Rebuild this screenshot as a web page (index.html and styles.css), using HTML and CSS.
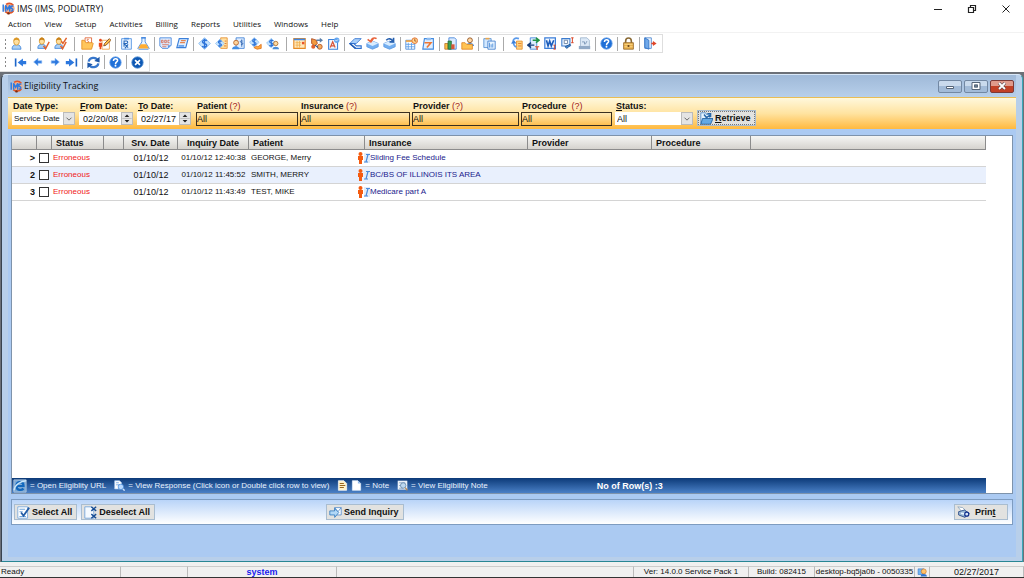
FILE: index.html
```html
<!DOCTYPE html>
<html lang="en">
<head>
<meta charset="utf-8">
<title>IMS (IMS, PODIATRY)</title>
<link rel="stylesheet" href="styles.css">
</head>
<body>
<svg class="sprite" aria-hidden="true">
  <symbol id="logo" viewBox="0 0 16 16"><circle cx="9" cy="8" r="6.6" fill="#f3b08c"/><path d="M5 3a7 7 0 0 1 9 1M4 12a7 7 0 0 0 10-1" stroke="#e0562a" stroke-width="2" fill="none"/><path d="M1.500 3v9M4.500 12V4l2.500 5 2.500-5v8M14 5.500c-3-1.500-4 1.500-2 2.500s2 3.500-1 3" stroke="#2f7ae0" stroke-width="1.800" fill="none"/><circle cx="8" cy="14" r="1.500" fill="#7a2c10"/></symbol>
  <symbol id="user" viewBox="0 0 16 16"><path d="M2.500 15c0-4 2-5.500 5.500-5.500s5.500 1.500 5.500 5.500z" fill="#a9cff5" stroke="#3c82d8"/><ellipse cx="8" cy="5.500" rx="3.500" ry="4.500" fill="#ffe0a0" stroke="#d8962a"/><path d="M4.500 5c0-5 7-5 7 0-2-2-5-2-7 0z" fill="#d8921e"/></symbol>
  <symbol id="usercheck" viewBox="0 0 16 16"><path d="M1 14c0-4 2-5 5-5s5 1 5 5z" fill="#a9cff5" stroke="#3c82d8"/><ellipse cx="6" cy="5" rx="3.200" ry="4" fill="#ffe0a0" stroke="#d8962a"/><path d="M3 4.500c0-5 6-5 6 0-2-1.500-4-1.500-6 0z" fill="#c8801a"/><path d="M8 11l2.500 3.500L15 6" fill="none" stroke="#e2622c" stroke-width="1.800"/></symbol>
  <symbol id="userchecks" viewBox="0 0 16 16"><use href="#usercheck"/><path d="M9 5l2 3 4.500-7" fill="none" stroke="#e2622c" stroke-width="1.800"/></symbol>
  <symbol id="folderdoc" viewBox="0 0 16 16"><path d="M5 1h8v9H5z" fill="#fff" stroke="#dd5a2a"/><path d="M9.500 3c-3-1-2 2-1 2s2 2-1 2" stroke="#dd5a2a" fill="none"/><path d="M1 4h3l2 3h8l1 1-2 7H1z" fill="#ffc65c" stroke="#e58a1c"/></symbol>
  <symbol id="manpencil" viewBox="0 0 16 16"><path d="M5 4h9v11H5z" fill="#fff" stroke="#f09a3c"/><circle cx="3" cy="4" r="1.700" fill="#e8471c"/><path d="M1 7h4v5H4v3H2v-3H1z" fill="#e8471c"/><path d="M7 11l1-3 6-6 2 2-6 6z" fill="#ffc049" stroke="#754020"/></symbol>
  <symbol id="rx" viewBox="0 0 16 16"><path d="M2 2h12v13H2z" fill="#e8f3ff" stroke="#4b8ee0"/><path d="M5 1h6v2H5z" fill="#4b8ee0"/><path d="M5 12V5h3c2 0 2 3 0 3H5l5 5m0-4l-4 5" stroke="#2466b9" stroke-width="1.300" fill="none"/></symbol>
  <symbol id="flask" viewBox="0 0 16 16"><path d="M6 1h4v5l5 8-1 1H2l-1-1 5-8z" fill="#e7f3ff" stroke="#3980dc"/><path d="M4.500 9h7l3 5H1.500z" fill="#ffad32"/><path d="M5 1h6" stroke="#3980dc" stroke-width="1.500"/></symbol>
  <symbol id="doc" viewBox="0 0 16 16"><path d="M1 1h14v9l-4 4H4l-3-3z" fill="#dcebff" stroke="#3f81da"/><path d="M3 4h2v3H3zM7 4h2v3H7zM13 4h-2v3h2M4 9.500h8M4 12h5" fill="none" stroke="#d5684f"/><path d="M15 10l-4 4v-4z" fill="#5b99ea"/></symbol>
  <symbol id="ledger" viewBox="0 0 16 16"><path d="M4 2h11l-3 11H1z" fill="#e0efff" stroke="#3b7fd9" stroke-width="1.400"/><path d="M6 4.500h6M5 7h6" stroke="#e5844f" stroke-width="1.500"/><path d="M3 11h7" stroke="#5d9be9" stroke-width="2"/></symbol>
  <symbol id="dollar" viewBox="0 0 16 16"><path d="M8 .8L15.200 8 8 15.200.8 8z" fill="#c5e3ff" stroke="#81b9f0"/><path d="M11 4.500C7 2.500 4.500 5 6 7l4 2c2 2-1 4.500-5 2.500M8 2v12" stroke="#2b72d8" stroke-width="1.700" fill="none"/></symbol>
  <symbol id="dollardoc" viewBox="0 0 16 16"><path d="M7 1h8v13H7z" fill="#ffe0a2" stroke="#e58a28"/><use href="#dollar" x="0" y="2" width="12" height="12"/><path d="M12 5h2M12 8h2M11 11h3" stroke="#d86b20"/></symbol>
  <symbol id="userdollar" viewBox="0 0 16 16"><path d="M5 1h10v13H5z" fill="#deedff" stroke="#397cd5"/><circle cx="5" cy="7" r="3" fill="#ffd49b" stroke="#b35c20"/><path d="M0 15c0-5 9-5 9 0z" fill="#438ee4"/><path d="M13 5c-4-1-3 2-1 2s2 3-1 2M12 3v9" stroke="#255cae" fill="none"/></symbol>
  <symbol id="dollarhand" viewBox="0 0 16 16"><use href="#dollar" x="0" y="0" width="13" height="13"/><path d="M6 13l4-2 1 1 4-3v5l-5 1z" fill="#ffab3e" stroke="#df7120"/></symbol>
  <symbol id="dollaruser" viewBox="0 0 16 16"><use href="#dollar" x="0" y="1" width="13" height="13"/><circle cx="12" cy="8" r="2.700" fill="#ffdb9f" stroke="#a9682b"/><path d="M8 15c0-4 8-4 8 0z" fill="#4b8ed8"/></symbol>
  <symbol id="calendar" viewBox="0 0 16 16"><path d="M1 2h14v12H1z" fill="#ffe9bd" stroke="#e68a25" stroke-width="1.400"/><path d="M1 2h14v2H1z" fill="#4186e0"/><path d="M3 7h7M3 10h7M5 5v8M8 5v8" stroke="#f0b050"/><path d="M11 6h3v3h-3z" fill="#e9532a"/></symbol>
  <symbol id="process" viewBox="0 0 16 16"><path d="M2 2l6 2 1 4-3 3-4-3z" fill="#f29a40" stroke="#a94116"/><circle cx="4" cy="12" r="2.500" fill="#e0602c"/><circle cx="12" cy="12" r="3" fill="#f6b060" stroke="#b24c1c"/><path d="M8 3h4V1l4 3-4 3V5H8z" fill="#5b7fa8"/><path d="M6 10l4 3" stroke="#30588d" stroke-width="1.500"/></symbol>
  <symbol id="doca" viewBox="0 0 16 16"><path d="M2 3h11v12H2z" fill="#f0f7ff" stroke="#3c82da" stroke-width="1.300"/><path d="M4 13l3-7 3 7M5 11h4" stroke="#d95336" stroke-width="1.500" fill="none"/><circle cx="12" cy="4" r="3.300" fill="#65a6ef"/><path d="M10.500 4l1 1 2-2" stroke="#fff" fill="none"/></symbol>
  <symbol id="book" viewBox="0 0 16 16"><path d="M7 2h8L9 8H1z" fill="#a9cffa" stroke="#2e70cf"/><path d="M1 8h5l3 3h6v3H8z" fill="#fff" stroke="#2e70cf" stroke-width="1.400"/><path d="M1 8l7 6" stroke="#235cb2" stroke-width="2"/></symbol>
  <symbol id="boxin" viewBox="0 0 16 16"><path d="M1 8l7-3 7 3v4l-7 3-7-3z" fill="#73aff0" stroke="#5b97e2"/><path d="M1 8l7 3 7-3-7-3z" fill="#d8ecff"/><path d="M13 2C10 0 7 2 6 5M2 3l4 3 3-4" stroke="#e8643c" stroke-width="2" fill="none"/></symbol>
  <symbol id="boxout" viewBox="0 0 16 16"><path d="M1 8l7-3 7 3v4l-7 3-7-3z" fill="#73aff0" stroke="#5b97e2"/><path d="M1 8l7 3 7-3-7-3z" fill="#d8ecff"/><path d="M4 4c3-3 6-2 8 1M13 1v5H8" stroke="#265fae" stroke-width="2" fill="none"/></symbol>
  <symbol id="calclock" viewBox="0 0 16 16"><path d="M1 4h11v11H1z" fill="#fff" stroke="#4285d8"/><path d="M1 4h11v2H1z" fill="#f1a13b"/><path d="M1 9h11M1 12h11M4 7v8M8 7v8" stroke="#579be8"/><circle cx="12" cy="4.500" r="3.500" fill="#ffd890" stroke="#e0662a"/><path d="M12 2v3h2" stroke="#a34b21" fill="none"/></symbol>
  <symbol id="clip" viewBox="0 0 16 16"><path d="M3 2h11v13H1z" fill="#e1efff" stroke="#438bdf" stroke-width="1.400"/><path d="M6 1h5v3H5z" fill="#8fbcf0"/><path d="M3 7h8l-5 6" stroke="#ed7734" stroke-width="2" fill="none"/></symbol>
  <symbol id="chart" viewBox="0 0 16 16"><path d="M6 1h7l2 2v12H6z" fill="#dcebff" stroke="#3a7ed8"/><path d="M1 8h4v7H1z" fill="#ffc043" stroke="#b9742a"/><path d="M5 5h4v10H5z" fill="#39a254" stroke="#256b36"/><path d="M9 9h4v6H9z" fill="#d7573b"/></symbol>
  <symbol id="folderuser" viewBox="0 0 16 16"><circle cx="11" cy="4" r="3" fill="#ffd9a5" stroke="#874817"/><path d="M6 11c0-5 10-5 10 0z" fill="#3c86dd"/><path d="M1 7h4l2 2h7v6H1z" fill="#ffc353" stroke="#df8422"/></symbol>
  <symbol id="clips" viewBox="0 0 16 16"><path d="M1 2h9v11H1z" fill="#d3e8ff" stroke="#4e8bd0"/><path d="M6 5h9v10H6z" fill="#e9f4ff" stroke="#3979ca"/><path d="M3 1h5v2H3z" fill="#eba74d"/><path d="M8 7v6M10 9v4M12 8v5" stroke="#4387d7"/></symbol>
  <symbol id="copyback" viewBox="0 0 16 16"><path d="M8 5h7v10H8z" fill="#ffd27b" stroke="#e68e2c"/><path d="M10 8h4M10 11h4" stroke="#e37527"/><path d="M11 2C6 0 3 3 4 7s2 5 4 5" stroke="#5b9aea" stroke-width="2" fill="none"/><path d="M1 8l4-4 3 4z" fill="#3b7fd9"/></symbol>
  <symbol id="swap" viewBox="0 0 16 16"><path d="M4 1h8v14H4z" fill="#deedff" stroke="#367fd6"/><path d="M7 4h7M11 1l4 3-4 3" stroke="#219344" stroke-width="1.800" fill="none"/><path d="M9 10H2m3-3l-4 3 4 3" stroke="#173d79" stroke-width="1.800" fill="none"/><path d="M10 12h5M12.500 12v4" stroke="#df4a27" stroke-width="1.500"/></symbol>
  <symbol id="word" viewBox="0 0 16 16"><path d="M1 1h13v13H1z" fill="#f0f7ff" stroke="#3b7ed9" stroke-width="1.500"/><path d="M3 4l2 7 2-6 2 6 3-7" stroke="#1c5dbb" stroke-width="2" fill="none"/><path d="M13 10v5M11.500 10h3M11.500 15h3" stroke="#d84224"/></symbol>
  <symbol id="scan" viewBox="0 0 16 16"><path d="M1 2h10v9H1z" fill="#e7f3ff" stroke="#3b7bce" stroke-width="1.300"/><path d="M4 4h4v4H4z" fill="#fff" stroke="#647b9c"/><path d="M12 10l-5 4-2-2 6-3z" fill="#418cdb" stroke="#204d86"/><path d="M14 1v6M12.500 1h3M12.500 7h3" stroke="#d84224" stroke-width="1.200"/></symbol>
  <symbol id="fax" viewBox="0 0 16 16"><path d="M3 1h8l3 3v10H3z" fill="#dbe8f6" stroke="#9cb4cd"/><path d="M1 11h14v4H1z" fill="#90a9c6"/><path d="M5 6h3v3M11 5L9 9" stroke="#718eaf" fill="none"/></symbol>
  <symbol id="help" viewBox="0 0 16 16"><circle cx="8" cy="8" r="7" fill="#1f70d8" stroke="#6ba3ea"/><path d="M5.500 6c0-4 6-3 5 0-.5 1.500-2.500 1.500-2.500 4" stroke="#fff" stroke-width="1.900" fill="none"/><circle cx="8" cy="12" r="1.200" fill="#fff"/></symbol>
  <symbol id="lock" viewBox="0 0 16 16"><path d="M4.500 8V5c0-5 7-5 7 0v3" stroke="#8a6a35" stroke-width="2" fill="none"/><path d="M2 7h12v8H2z" fill="#e7b04e" stroke="#946525"/><path d="M3 9h10M3 12h10" stroke="#ffdc8e"/><circle cx="8" cy="11" r="1.300" fill="#63401a"/></symbol>
  <symbol id="exit" viewBox="0 0 16 16"><path d="M1 1h8v13H1z" fill="#eef6ff" stroke="#4480cc"/><path d="M1 1l5 3v11l-5-2z" fill="#70a9ea" stroke="#2e6fc3"/><path d="M9 8h3" stroke="#df4528" stroke-width="2"/><path d="M11 5l4.500 3-4.500 3z" fill="#df4528"/></symbol>
  <symbol id="right" viewBox="0 0 16 16"><path d="M2 6h6V2l7 6-7 6v-4H2z" fill="#2d78de" stroke="#8cbcf3"/></symbol>
  <symbol id="left" viewBox="0 0 16 16"><path d="M14 6H8V2L1 8l7 6v-4h6z" fill="#2d78de" stroke="#8cbcf3"/></symbol>
  <symbol id="first" viewBox="0 0 16 16"><path d="M2 3v10" stroke="#1d66ca" stroke-width="2"/><path d="M15 6h-4V3L4.500 8l6.500 5v-3h4z" fill="#2d78de"/></symbol>
  <symbol id="last" viewBox="0 0 16 16"><path d="M14 3v10" stroke="#1d66ca" stroke-width="2"/><path d="M1 6h4V3l6.500 5L5 13v-3H1z" fill="#2d78de"/></symbol>
  <symbol id="refresh" viewBox="0 0 16 16"><path d="M2 7c1-6 9-6 11-2M14 9c-1 6-9 6-11 2" stroke="#3777cc" stroke-width="2.800" fill="none"/><path d="M15.500 1v7L9 6zM.5 15V8L7 10z" fill="#1f58a8"/></symbol>
  <symbol id="stop" viewBox="0 0 16 16"><circle cx="8" cy="8" r="7" fill="#0d58b4" stroke="#5691d2"/><path d="M5 5l6 6m0-6l-6 6" stroke="#fff" stroke-width="2"/></symbol>
  <symbol id="person" viewBox="0 0 7 12"><circle cx="3.500" cy="2" r="2" fill="#f45b10"/><path d="M1 4h5v4H5v4H2V8H1z" fill="#f45b10"/></symbol>
  <symbol id="info" viewBox="0 0 6 12"><path d="M0 1h6v10H0z" fill="#e4edf8"/><path d="M2 2.500h4M0 10h4M4 2.500L2 10" stroke="#4b8cdc" stroke-width="1.200" fill="none"/></symbol>
  <symbol id="retrieve" viewBox="0 0 16 16"><path d="M1 1h6l1 2h4v11H1z" fill="#e6f4ff" stroke="#4a86c4"/><path d="M3 8h13l-3 7H1z" fill="#64a9e4" stroke="#1b5b9d"/><path d="M5 3l3 4 4-3M9 2h4v4" stroke="#2566a8" stroke-width="1.800" fill="none"/></symbol>
  <symbol id="select" viewBox="0 0 16 16"><path d="M1 1h12v14H1z" fill="#fff" stroke="#73a6dc"/><path d="M3 4h7M3 7h4M3 13h8" stroke="#73a6dc" stroke-width="1.300"/><path d="M5 8l3 4 7-10" stroke="#235ca5" stroke-width="2.200" fill="none"/></symbol>
  <symbol id="deselect" viewBox="0 0 16 16"><path d="M1 1h8l3 3v11H1z" fill="#f5faff" stroke="#6b9ed8"/><path d="M9 1l6 5m0-5L9 6M9 10l6 5m0-5l-6 5" stroke="#174d94" stroke-width="1.700"/></symbol>
  <symbol id="send" viewBox="0 0 16 16"><path d="M7 2h8v9H7z" fill="#fff" stroke="#5189ca"/><path d="M7 2l4 5 4-5" fill="none" stroke="#5189ca"/><path d="M1 6h6V3l5 5-5 6v-3H1z" fill="#b2d8f7" stroke="#2e77bd"/></symbol>
  <symbol id="printer" viewBox="0 0 16 16"><path d="M1 1l6 1 4 4-5 1z" fill="#fff" stroke="#89a3bb"/><path d="M2 7l7-2 6 4-5 5-8-3z" fill="#9dbad7" stroke="#1b3f80"/><path d="M5 9l6 1" stroke="#e8f7ff" stroke-width="2"/><circle cx="12" cy="10" r="2.500" fill="#d4e6fa" stroke="#102d8b" stroke-width="1.500"/></symbol>
  <symbol id="globe" viewBox="0 0 16 16"><path d="M1 1h14v14H1z" fill="#7ba8d5" stroke="#afc5dc"/><path d="M4 8h8c0-6-8-6-8 0s6 5 8 3" stroke="#1268bd" stroke-width="2.500" fill="none"/><path d="M1 13C2 7 9 2 15 2" stroke="#cbe8fa" stroke-width="1.500" fill="none"/></symbol>
  <symbol id="response" viewBox="0 0 16 16"><path d="M1 1h7l3 3v9H1z" fill="#fff" stroke="#a6c8f1"/><path d="M3 4h4M3 7h5" stroke="#478bda"/><circle cx="10" cy="10" r="4" fill="#b8d9ff" stroke="#3b81d4"/><path d="M13 13l2.500 2.500" stroke="#d1e5ff" stroke-width="2"/></symbol>
  <symbol id="note" viewBox="0 0 16 16"><path d="M2 1h8l4 4v10H2z" fill="#fff2c9" stroke="#fff"/><path d="M4 5h6M4 8h8M4 11h6" stroke="#9a661e" stroke-width="1.500"/></symbol>
  <symbol id="blank" viewBox="0 0 16 16"><path d="M2 1h8l4 4v10H2z" fill="#fff" stroke="#e4f1ff"/><path d="M10 1v4h4" fill="#8fb9ec"/></symbol>
  <symbol id="view" viewBox="0 0 16 16"><path d="M1 1h14v13H1z" fill="#edf3f9"/><path d="M3 4h9M3 8h5M3 12h6" stroke="#7293bc"/><circle cx="9" cy="8" r="4" fill="#bdd8ef" stroke="#52789e"/><path d="M12 11l3 4" stroke="#b48b5a" stroke-width="2"/></symbol>
  <symbol id="session" viewBox="0 0 16 16"><path d="M1 3h9v9H1z" fill="#73b5f0" stroke="#3676c9"/><circle cx="10" cy="7" r="4" fill="#ffc36b" stroke="#c87120"/><path d="M5 15c0-5 10-5 10 0z" fill="#2e74cf"/></symbol>
  <symbol id="chevron" viewBox="0 0 12 12"><path d="M3 5l3 3 3-3" fill="none" stroke="#6b6b6b" stroke-width="1.200"/></symbol>
  <symbol id="updown" viewBox="0 0 12 14"><path d="M0 7h12" stroke="#b8b8b8"/><path d="M6 2L3 5h6zM6 12L3 9h6z" fill="#222"/></symbol>
</svg>

<div class="app">
  <header class="titlebar">
    <svg class="icon"><use href="#logo"/></svg>
    <h1>IMS (IMS, PODIATRY)</h1>
    <div class="syscontrols">
      <button aria-label="Minimize"><svg viewBox="0 0 10 10"><path d="M1 5.500h8" stroke="#222"/></svg></button>
      <button aria-label="Restore"><svg viewBox="0 0 10 10"><path d="M1.500 3.500h5v5h-5zM3.500 3V1.500h5v5H7" fill="none" stroke="#222" stroke-width="1.200"/></svg></button>
      <button aria-label="Close"><svg viewBox="0 0 10 10"><path d="M1.500 1.500l7 7m0-7l-7 7" stroke="#222"/></svg></button>
    </div>
  </header>
  <nav class="menu">
    <button>Action</button><button>View</button><button>Setup</button><button>Activities</button><button>Billing</button><button>Reports</button><button>Utilities</button><button>Windows</button><button>Help</button>
  </nav>
  <div class="toolbars">
    <div class="toolbar" role="toolbar" aria-label="Main">
      <i class="grip"></i>
      <button aria-label="Patient"><svg><use href="#user"/></svg></button><i class="sep wide"></i>
      <button aria-label="Check in"><svg><use href="#usercheck"/></svg></button><button aria-label="Check out"><svg><use href="#userchecks"/></svg></button><i class="sep wide"></i>
      <button aria-label="Chart"><svg><use href="#folderdoc"/></svg></button><button aria-label="Visit note"><svg><use href="#manpencil"/></svg></button><i class="sep"></i>
      <button aria-label="Prescription"><svg><use href="#rx"/></svg></button><button aria-label="Lab"><svg><use href="#flask"/></svg></button><i class="sep"></i>
      <button aria-label="Document"><svg><use href="#doc"/></svg></button><button aria-label="Ledger"><svg><use href="#ledger"/></svg></button><i class="sep"></i>
      <button aria-label="Charges"><svg><use href="#dollar"/></svg></button><button aria-label="Claims"><svg><use href="#dollardoc"/></svg></button><button aria-label="Account"><svg><use href="#userdollar"/></svg></button><button aria-label="Payment"><svg><use href="#dollarhand"/></svg></button><button aria-label="Patient payment"><svg><use href="#dollaruser"/></svg></button><i class="sep wide"></i>
      <button aria-label="Scheduler"><svg><use href="#calendar"/></svg></button><button aria-label="Workflow"><svg><use href="#process"/></svg></button><button aria-label="Authorization"><svg><use href="#doca"/></svg></button><i class="sep"></i>
      <button aria-label="Book"><svg><use href="#book"/></svg></button><button aria-label="Inbox"><svg><use href="#boxin"/></svg></button><button aria-label="Outbox"><svg><use href="#boxout"/></svg></button><i class="sep"></i>
      <button aria-label="Reminder"><svg><use href="#calclock"/></svg></button><button aria-label="Task"><svg><use href="#clip"/></svg></button><i class="sep"></i>
      <button aria-label="Reports"><svg><use href="#chart"/></svg></button><button aria-label="Patient folder"><svg><use href="#folderuser"/></svg></button><i class="sep"></i>
      <button aria-label="Clipboards"><svg><use href="#clips"/></svg></button><i class="sep wide"></i>
      <button aria-label="Import"><svg><use href="#copyback"/></svg></button><button aria-label="Transfer"><svg><use href="#swap"/></svg></button><button aria-label="Word"><svg><use href="#word"/></svg></button><button aria-label="Scan"><svg><use href="#scan"/></svg></button><button aria-label="Fax"><svg><use href="#fax"/></svg></button><i class="sep"></i>
      <button aria-label="Help"><svg><use href="#help"/></svg></button><i class="sep"></i>
      <button aria-label="Lock"><svg><use href="#lock"/></svg></button><i class="sep"></i>
      <button aria-label="Exit"><svg><use href="#exit"/></svg></button>
    </div>
    <div class="toolbar nav" role="toolbar" aria-label="Records">
      <i class="grip"></i>
      <button aria-label="First"><svg><use href="#first"/></svg></button><button aria-label="Previous"><svg class="small"><use href="#left"/></svg></button><button aria-label="Next"><svg class="small"><use href="#right"/></svg></button><button aria-label="Last"><svg><use href="#last"/></svg></button><i class="sep"></i>
      <button aria-label="Refresh"><svg><use href="#refresh"/></svg></button><i class="sep"></i>
      <button aria-label="Help"><svg><use href="#help"/></svg></button><i class="sep"></i>
      <button aria-label="Close window"><svg><use href="#stop"/></svg></button>
    </div>
  </div>

  <main class="workspace">
    <section class="window">
      <div class="wintitle">
        <svg class="icon"><use href="#logo"/></svg>
        <h2>Eligibility Tracking</h2>
        <div class="wincontrols">
          <button aria-label="Minimize"><svg viewBox="0 0 12 8"><path d="M2.500 4.500h7v2h-7z" fill="#fff" stroke="#556578"/></svg></button>
          <button aria-label="Maximize"><svg viewBox="0 0 12 8"><path d="M3 1.500h6v5H3z" fill="#789" stroke="#fff" stroke-width="2"/><path d="M2 .5h8v7H2zM4.500 3h3v2h-3z" fill="none" stroke="#556578"/></svg></button>
          <button class="danger" aria-label="Close"><svg viewBox="0 0 12 8"><path d="M3 1l6 6m0-6L3 7" stroke="#54414a" stroke-width="3"/><path d="M3 1l6 6m0-6L3 7" stroke="#fff" stroke-width="1.800"/></svg></button>
        </div>
      </div>
      <div class="client">
        <form class="filters">
          <div class="field type"><label for="dtype">Date Type:</label><div class="combo"><select id="dtype"><option>Service Date</option></select><svg class="arrow"><use href="#chevron"/></svg></div></div>
          <div class="field date"><label for="from"><u>F</u>rom Date:</label><div class="combo"><input id="from" value="02/20/08"><svg class="arrow"><use href="#updown"/></svg></div></div>
          <div class="field date"><label for="to"><u>T</u>o Date:</label><div class="combo"><input id="to" value="02/27/17"><svg class="arrow"><use href="#updown"/></svg></div></div>
          <div class="field patient"><label for="pat">Patient <a href="#pat">(?)</a></label><input class="pick" id="pat" value="All"></div>
          <div class="field insurance"><label for="ins">Insurance <a href="#ins">(?)</a></label><input class="pick" id="ins" value="All"></div>
          <div class="field provider"><label for="prov">Provider <a href="#prov">(?)</a></label><input class="pick" id="prov" value="All"></div>
          <div class="field procedure"><label for="proc">Procedure &nbsp;<a href="#proc">(?)</a></label><input class="pick" id="proc" value="All"></div>
          <div class="field status"><label for="stat"><u>S</u>tatus:</label><div class="combo"><select id="stat"><option>All</option></select><svg class="arrow"><use href="#chevron"/></svg></div></div>
          <button type="button" class="btn retrieve"><svg><use href="#retrieve"/></svg><span><u>R</u>etrieve</span></button>
        </form>

        <div class="grid">
          <div class="rows">
            <table>
              <colgroup><col class="c-num"><col class="c-chk"><col class="c-status"><col class="c-gap"><col class="c-srv"><col class="c-inq"><col class="c-pat"><col class="c-ins"><col class="c-prov"><col class="c-proc"><col></colgroup>
              <thead><tr><th></th><th></th><th>Status</th><th></th><th class="mid">Srv. Date</th><th class="mid">Inquiry Date</th><th>Patient</th><th>Insurance</th><th>Provider</th><th>Procedure</th><th></th></tr></thead>
              <tbody>
                <tr><td class="num">&gt;</td><td><input type="checkbox" aria-label="Select row 1"></td><td class="err">Erroneous</td><td></td><td class="mid srv">01/10/12</td><td class="mid">01/10/12 12:40:38</td><td class="name">GEORGE, Merry</td><td class="ins"><svg class="person"><use href="#person"/></svg><svg class="info"><use href="#info"/></svg>Sliding Fee Schedule</td><td></td><td></td><td></td></tr>
                <tr><td class="num">2</td><td><input type="checkbox" aria-label="Select row 2"></td><td class="err">Erroneous</td><td></td><td class="mid srv">01/10/12</td><td class="mid">01/10/12 11:45:52</td><td class="name">SMITH, MERRY</td><td class="ins"><svg class="person"><use href="#person"/></svg><svg class="info"><use href="#info"/></svg>BC/BS OF ILLINOIS ITS AREA</td><td></td><td></td><td></td></tr>
                <tr><td class="num">3</td><td><input type="checkbox" aria-label="Select row 3"></td><td class="err">Erroneous</td><td></td><td class="mid srv">01/10/12</td><td class="mid">01/10/12 11:43:49</td><td class="name">TEST, MIKE</td><td class="ins"><svg class="person"><use href="#person"/></svg><svg class="info"><use href="#info"/></svg>Medicare part A</td><td></td><td></td><td></td></tr>
              </tbody>
            </table>
          </div>
          <div class="legend">
            <svg class="big"><use href="#globe"/></svg><span>= Open Eligiblity URL</span>
            <svg><use href="#response"/></svg><span>= View Response (Click icon or Double click row to view)</span>
            <svg><use href="#note"/></svg><svg><use href="#blank"/></svg><span>= Note</span>
            <svg><use href="#view"/></svg><span>= View Eligibility Note</span>
            <strong>No of Row(s) :3</strong>
          </div>
        </div>

        <div class="actions">
          <div class="left">
            <button class="btn"><svg><use href="#select"/></svg><span>Select All</span></button>
            <button class="btn"><svg><use href="#deselect"/></svg><span>Deselect All</span></button>
          </div>
          <button class="btn send"><svg><use href="#send"/></svg><span>Send Inquiry</span></button>
          <button class="btn print"><svg><use href="#printer"/></svg><span>Prin<u>t</u></span></button>
        </div>
      </div>
    </section>
  </main>

  <footer class="statusbar">
    <span class="s-ready">Ready</span><span class="s-blank"></span><span class="s-user">system</span><span class="s-fill"></span><span class="s-ver">Ver: 14.0.0 Service Pack 1</span><span class="s-build">Build: 082415</span><span class="s-host">desktop-bq5ja0b - 0050335</span><span class="s-ico"><svg><use href="#session"/></svg></span><span class="s-date">02/27/2017</span>
  </footer>
</div>
</body>
</html>
```
FILE: styles.css
```css
* { box-sizing: border-box; }
body {
  margin: 0;
  background: #fff;
  color: #111;
  font: 8px/12px "Liberation Sans", sans-serif;
}
button, input, select { font: inherit; color: inherit; margin: 0; padding: 0; border: 0; background: none; border-radius: 0; }
h1, h2 { margin: 0; font-weight: normal; }
svg { display: block; flex: none; }
.sprite { position: absolute; width: 0; height: 0; }
.app { display: flex; flex-direction: column; height: 100vh; overflow: hidden; }
.icon { width: 13px; height: 13px; }

.titlebar { display: flex; align-items: center; height: 17px; padding: 0 13px 0 2px; gap: 2px; font-family: "Open Sans", "Noto Sans", sans-serif; }
h1 { font-size: 9px; line-height: 12px; }
.syscontrols { display: flex; gap: 24px; margin-left: auto; }
.syscontrols svg { width: 10px; height: 10px; }

.menu { display: flex; align-items: flex-start; height: 16px; padding-left: 8px; gap: 13px; border-bottom: 1px solid #f2f2f2; font: 8px/14px "Open Sans", "Noto Sans", sans-serif; }

.toolbars { display: flex; flex-direction: column; align-items: flex-start; height: 39px; padding-top: 1px; }
.toolbar { display: flex; align-items: center; height: 19px; padding: 0 3px 0 4px; border: 1px solid #dedede; border-left: 0; }
.toolbar button { display: grid; place-items: center; width: 17px; height: 17px; }
.toolbar svg { width: 13px; height: 13px; }
.toolbar .small { width: 10px; height: 10px; }
.grip { width: 4px; height: 12px; background: radial-gradient(circle, #888 1px, transparent 1px) 0 0 / 3px 4px repeat-y; }
.sep { width: 5px; height: 14px; background: linear-gradient(#aaa, #aaa) center / 1px 100% no-repeat; }
.sep.wide { width: 10px; }
.toolbar.nav { border-top: 0; }
.nav .grip { margin-right: 4px; }

.workspace { display: flex; flex: 1; min-height: 0; padding: 0 1px; background: #6c7077; border-top: 2px solid #6c7077; }
.window { display: flex; flex-direction: column; flex: 1; min-width: 0; border: 1px solid #4b5b6b; border-color: #d9e8f8 #38a8b8 #288694 #39434f; border-radius: 5px 5px 0 0; background: #b8cfea; padding: 0 6px 4px; }
.wintitle { display: flex; align-items: center; height: 22px; padding-left: 2px; gap: 1px; background: linear-gradient(#9fb9d8, #b7cfea); font-family: "Open Sans", "Noto Sans", sans-serif; }
h2 { font-size: 9px; line-height: 12px; }
.wincontrols { display: flex; gap: 2px; margin-left: auto; padding-right: 2px; }
.wincontrols button { display: grid; place-items: center; width: 24px; height: 13px; border: 1px solid #7288a3; border-radius: 2px; background: linear-gradient(#c9daed 50%, #a2bbd8 50%); }
.wincontrols .danger { border-color: #7b3a38; background: linear-gradient(#e09a8b 50%, #c24026 50%); }
.wincontrols svg { width: 12px; height: 8px; }
.client { display: flex; flex-direction: column; flex: 1; min-height: 0; background: #abcaf2; }

.filters { display: flex; align-items: flex-start; height: 32px; padding: 3px 4px 0; gap: 4px; border-top: 1px solid #e9bd55; background: linear-gradient(#fff8dc, #ffe3a0 50%, #ffb93f); }
.field { display: flex; flex-direction: column; }
.field label { height: 11px; font: bold 9px/11px "Liberation Sans", sans-serif; padding-left: 1px; white-space: nowrap; }
.field a { color: #a02020; font-weight: normal; text-decoration: none; }
.combo { display: flex; height: 13px; background: #fff; }
.combo select, .combo input { flex: 1; min-width: 0; width: 0; padding-left: 2px; appearance: none; outline: 0; }
.date input { padding-left: 4px; font-size: 9px; }
.arrow { width: 12px; height: 13px; background: #e4e4e4; border: 1px solid #bbb; }
.type { width: 63px; }
.date { width: 54px; }
.patient { width: 102px; margin-left: 1px; }
.insurance { width: 110px; margin-left: -2px; }
.provider { width: 107px; margin-left: -2px; }
.procedure { width: 91px; margin-left: -2px; }
.status { width: 78px; margin-left: -1px; }
.status select { font-size: 9px; }
.pick { width: 100%; height: 14px; border: 1px solid #3a3020; background: linear-gradient(#ffeab5, #ffc04f); font-size: 9px; }
.btn { display: flex; align-items: center; gap: 2px; height: 16px; padding: 0 4px 0 2px; border: 1px solid #a9bdd0; background: #e2e2e0; font: bold 9px/12px "Liberation Sans", sans-serif; white-space: nowrap; }
.btn svg { width: 13px; height: 13px; }
.retrieve { margin-top: 9px; outline: 1px dotted #777; outline-offset: -2px; }

.grid { display: flex; flex-direction: column; flex: 1; min-height: 0; margin: 6px 3px 0; border: 1px solid #7e93ab; background: #fff; }
.rows { flex: 1; min-height: 0; }
table { width: calc(100% - 26px); table-layout: fixed; border-collapse: separate; border-spacing: 0; }
.c-num { width: 25px; }
.c-chk { width: 15px; }
.c-status { width: 52px; }
.c-gap { width: 20px; }
.c-srv { width: 54px; }
.c-inq { width: 71px; }
.c-pat { width: 116px; }
.c-ins { width: 163px; }
.c-prov { width: 124px; }
.c-proc { width: 99px; }
th { height: 14px; padding: 0 0 0 4px; border-right: 1px solid #8c8c8c; border-bottom: 1px solid #8c8c8c; background: linear-gradient(#f6f6f4, #d5d3ce); font: bold 9px/12px "Liberation Sans", sans-serif; text-align: left; white-space: nowrap; }
td { height: 17px; padding: 0; border-bottom: 1px solid #d4d4d4; white-space: nowrap; }
th.mid, .mid { text-align: center; padding: 0; }
.srv { font-size: 9px; }
.num { padding-right: 2px; text-align: right; font: bold 9px/12px "Liberation Sans", sans-serif; }
tbody tr:nth-child(2) { background: #e9f0fd; }
td input { display: block; appearance: none; width: 10px; height: 10px; margin-left: 2px; border: 1px solid #333; background: #fff; }
.err { color: #f01818; padding-left: 1px; }
.name { padding-left: 2px; }
.ins { color: #1a1a8c; }
.ins svg { float: left; height: 12px; }
.person { width: 7px; margin-left: -8px; }
.info { width: 6px; margin-left: -1px; }

.legend { display: flex; align-items: center; height: 15px; margin-right: 26px; padding-left: 1px; gap: 3px; background: linear-gradient(#0c3a78, #4a80c6); color: #e9f2ff; white-space: nowrap; }
.legend svg { width: 11px; height: 11px; }
.legend .big { width: 14px; height: 14px; }
.legend span + svg { margin-left: 5px; }
.legend strong { margin-left: 106px; font: bold 9px/12px "Liberation Sans", sans-serif; color: #fff; }

.actions { display: flex; align-items: center; justify-content: space-between; height: 26px; margin: 5px 3px 32px; padding: 0 4px 0 2px; border: 1px solid #7e9cc0; background: linear-gradient(#b9d4f8, #fff); }
.left { display: flex; gap: 4px; width: 312px; }
.send { margin-right: auto; }
.print { width: 54px; gap: 5px; }

.statusbar { display: flex; height: 16px; padding-top: 4px; border-bottom: 1px solid #333; background: #f0f0f0; line-height: 10px; white-space: nowrap; }
.statusbar span { border-right: 1px solid #bbb; border-top: 1px solid #ccc; text-align: center; }
.statusbar svg { width: 11px; height: 10px; margin: 0 auto; }
.statusbar .s-ready { width: 121px; padding-left: 1px; text-align: left; }
.s-blank { width: 67px; }
.statusbar .s-user { width: 149px; color: #1a1aee; font: bold 9px/10px "Liberation Sans", sans-serif; }
.s-fill { flex: 1; }
.s-ver { width: 115px; }
.s-build { width: 66px; }
.s-host { width: 100px; }
.s-ico { width: 15px; }
.s-date { width: 94px; font-size: 9px; }
```
